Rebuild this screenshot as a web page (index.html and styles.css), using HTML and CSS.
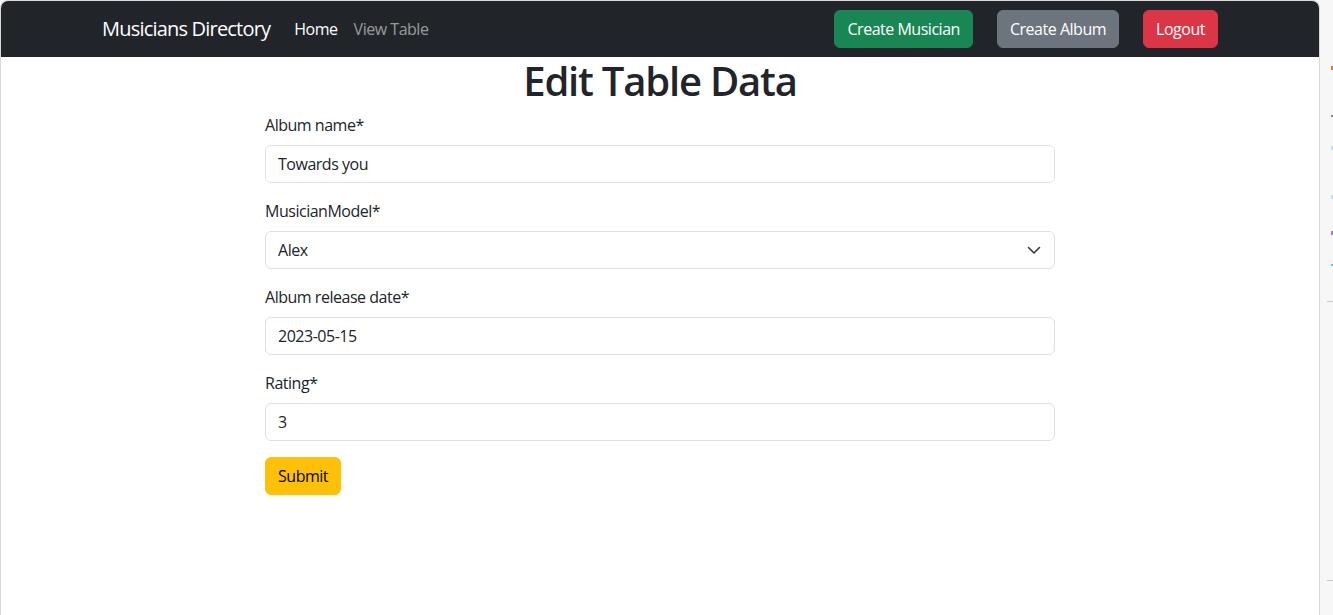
FILE: index.html
```html
<!DOCTYPE html>
<html lang="en">
<head>
<meta charset="utf-8">
<title>Edit Table Data</title>
<link rel="stylesheet" href="styles.css">
</head>
<body>
<div class="screen">
  <div class="window">
    <nav class="navbar">
      <div class="container nav-inner">
        <a class="brand" href="#">Musicians Directory</a>
        <ul class="nav-links">
          <li><a class="nav-link active" href="#">Home</a></li>
          <li><a class="nav-link" href="#">View Table</a></li>
        </ul>
        <div class="nav-actions">
          <a class="btn btn-success" href="#">Create Musician</a>
          <a class="btn btn-secondary" href="#">Create Album</a>
          <a class="btn btn-danger" href="#">Logout</a>
        </div>
      </div>
    </nav>
    <main class="page">
      <h1 class="title">Edit Table Data</h1>
      <form class="form">
        <div class="field">
          <label class="label" for="album">Album name*</label>
          <input class="control" id="album" type="text" value="Towards you">
        </div>
        <div class="field">
          <label class="label" for="musician">MusicianModel*</label>
          <div class="select-wrap">
            <select class="control select" id="musician">
              <option>Alex</option>
            </select>
            <svg class="chevron" width="14" height="9" viewBox="0 0 14 9" aria-hidden="true"><path d="M1.5 1.5 7 7l5.5-5.5" fill="none" stroke="#343a40" stroke-width="1.6" stroke-linecap="round" stroke-linejoin="round"/></svg>
          </div>
        </div>
        <div class="field">
          <label class="label" for="date">Album release date*</label>
          <input class="control" id="date" type="text" value="2023-05-15">
        </div>
        <div class="field">
          <label class="label" for="rating">Rating*</label>
          <input class="control" id="rating" type="text" value="3">
        </div>
        <button class="btn btn-warning" type="button">Submit</button>
      </form>
    </main>
  </div>
  <aside class="sidebar">
    <span class="mark mark-orange"></span>
    <span class="mark mark-gray"></span>
    <span class="mark mark-blue"></span>
    <span class="mark mark-blue2"></span>
    <span class="mark mark-purple"></span>
    <span class="mark mark-cyan"></span>
    <span class="sep"></span>
    <span class="sep sep-bottom"></span>
  </aside>
</div>
</body>
</html>
```
FILE: styles.css
```css
* { box-sizing: border-box; }
html, body { margin: 0; padding: 0; }
body {
  font-family: "Open Sans", "Noto Sans", sans-serif;
  font-size: 16px;
  line-height: 1.5;
  letter-spacing: -0.03em;
  color: #212529;
  background: #f7f7f7;
}
.screen {
  display: flex;
  height: 615px;
  overflow: hidden;
}
.window {
  flex: 1;
  background: #fff;
  border: 1px solid #d9d9d9;
  border-bottom: 0;
  border-radius: 8px 8px 0 0;
  overflow: hidden;
}
.navbar {
  background: #212529;
  padding: 8px 0;
}
.container {
  max-width: 1140px;
  margin: 0 auto;
  padding: 0 12px;
}
.nav-inner {
  display: flex;
  align-items: center;
}
.brand {
  color: #fff;
  font-size: 20px;
  line-height: 30px;
  letter-spacing: -0.04em;
  padding: 5px 0;
  margin-right: 16px;
  text-decoration: none;
}
.nav-links {
  display: flex;
  list-style: none;
  margin: 0;
  padding: 0;
}
.nav-link {
  display: block;
  padding: 8px;
  color: rgba(255, 255, 255, 0.55);
  text-decoration: none;
}
.nav-link.active { color: #fff; }
.nav-actions {
  margin-left: auto;
  display: flex;
  gap: 24px;
}
.btn {
  display: inline-block;
  font-family: inherit;
  font-size: 16px;
  line-height: 24px;
  letter-spacing: -0.03em;
  padding: 6px 12px;
  border: 1px solid transparent;
  border-radius: 6px;
  text-decoration: none;
  color: #fff;
  cursor: pointer;
}
.btn-success { background: #198754; border-color: #198754; }
.btn-secondary { background: #6c757d; border-color: #6c757d; }
.btn-danger { background: #dc3545; border-color: #dc3545; }
.btn-warning { background: #ffc107; border-color: #ffc107; color: #000; }
.page { padding: 0; }
.title {
  text-align: center;
  font-size: 40px;
  font-weight: 600;
  line-height: 1.2;
  letter-spacing: -0.03em;
  margin: 0 0 8px;
}
.form {
  width: 790px;
  margin: 0 auto;
}
.field { margin-bottom: 16px; }
.label {
  display: block;
  margin-bottom: 8px;
}
.control {
  display: block;
  width: 100%;
  height: 38px;
  padding: 6px 12px;
  font-family: inherit;
  font-size: 16px;
  line-height: 24px;
  letter-spacing: -0.03em;
  color: #212529;
  background: #fff;
  border: 1px solid #dee2e6;
  border-radius: 6px;
  outline: none;
}
.select-wrap { position: relative; }
.select {
  appearance: none;
  -webkit-appearance: none;
  padding-right: 36px;
}
.chevron {
  position: absolute;
  right: 14px;
  top: 15px;
  pointer-events: none;
}
.sidebar {
  width: 13px;
  position: relative;
  background: #f7f7f7;
}
.mark {
  position: absolute;
  right: 0;
  width: 2px;
  height: 4px;
}
.mark-orange { top: 66px; background: #f0752b; }
.mark-gray { top: 115px; height: 2px; background: #8a8a8a; }
.mark-blue { top: 146px; background: #c9d6f7; }
.mark-blue2 { top: 195px; background: #c7dcf5; }
.mark-purple { top: 231px; background: #a77cf0; }
.mark-cyan { top: 264px; height: 2px; background: #55c3f0; }
.sep {
  position: absolute;
  right: 0;
  top: 301px;
  width: 6px;
  height: 1px;
  background: #c8c8c8;
}
.sep-bottom { top: 580px; }
```
